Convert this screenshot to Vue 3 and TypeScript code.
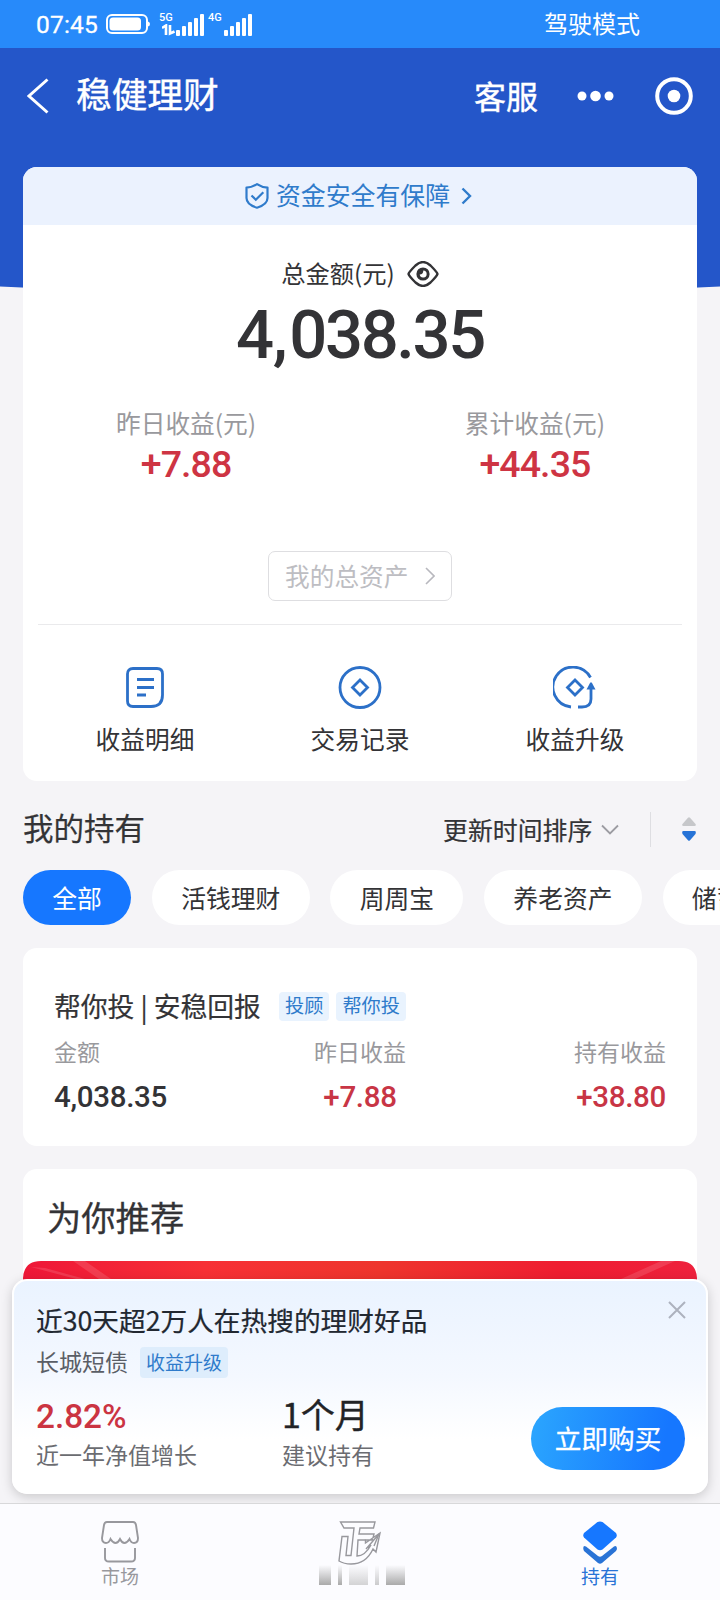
<script setup lang="ts">
import { ref } from 'vue'

interface Metric {
  label: string
  value: string
}

const summary: Metric[] = [
  { label: '昨日收益(元)', value: '+7.88' },
  { label: '累计收益(元)', value: '+44.35' },
]
const categories: string[] = ['全部', '活钱理财', '周周宝', '养老资产', '储蓄']
const activeCategory = ref<string>('全部')
const holding: Metric[] = [
  { label: '金额', value: '4,038.35' },
  { label: '昨日收益', value: '+7.88' },
  { label: '持有收益', value: '+38.80' },
]
const signalBars: number[] = [6, 10, 14, 18, 22]
</script>

<template>
  <div class="page">
    <div class="status">
      <span class="clock">07:45</span>
      <svg class="battery" width="44" height="20" viewBox="0 0 44 20">
        <rect x="1" y="1" width="40" height="18" rx="5" fill="none" stroke="#fff" stroke-width="2" />
        <rect x="3.5" y="3.5" width="31.500" height="13" rx="3.500" fill="#fff" />
        <path d="M42 7.500q2 .5 2 2.500t-2 2.500z" fill="#fff" />
      </svg>
      <div class="signal first">
        <div class="net">
          <span>5G</span>
          <svg width="13" height="12" viewBox="0 0 13 12" fill="none" stroke="#fff" stroke-width="2.600">
            <path d="M0 4 4 1.500V11M8 1v8.500l4.500-2" />
          </svg>
        </div>
        <div class="bars"><i v-for="h in signalBars" :key="h" :style="{ height: h + 'px' }"></i></div>
      </div>
      <div class="signal">
        <div class="net"><span>4G</span></div>
        <div class="bars"><i v-for="h in signalBars" :key="h" :style="{ height: h + 'px' }"></i></div>
      </div>
      <span class="mode">驾驶模式</span>
    </div>

    <header class="nav">
      <svg class="back" width="22" height="36" viewBox="0 0 22 36" fill="none" stroke="#fff" stroke-width="3">
        <path d="M20.500 1.500 2 18l18.500 16.500" />
      </svg>
      <h1>稳健理财</h1>
      <span class="service">客服</span>
      <svg class="dots" width="38" height="12" viewBox="0 0 38 12" fill="#fff">
        <circle cx="5" cy="6" r="4.500" /><circle cx="18.500" cy="6" r="5.300" /><circle cx="32" cy="6" r="4.500" />
      </svg>
      <svg class="target" width="38" height="38" viewBox="0 0 38 38">
        <circle cx="19" cy="19" r="16.800" fill="none" stroke="#fff" stroke-width="4" />
        <circle cx="19" cy="19" r="6.300" fill="#fff" />
      </svg>
    </header>

    <main>
      <section class="card overview">
        <div class="safety">
          <svg width="24" height="26" viewBox="0 0 24 26" fill="none" stroke="#2f7bcb" stroke-width="2.200">
            <path d="M12 1.200Q16.500 4.300 22.500 4.600V15Q22.500 21.500 12 24.700 1.500 21.500 1.500 15V4.600Q7.500 4.300 12 1.200Z" stroke-linejoin="round" />
            <path d="m6.500 12.500 4.300 4.200 7.500-7.500" />
          </svg>
          <span>资金安全有保障</span>
          <svg class="safe-arrow" width="11" height="18" viewBox="0 0 11 18" fill="none" stroke="#2f7bcb" stroke-width="2.400"><path d="m1.500 1.500 7.500 7.500-7.500 7.500" /></svg>
        </div>
        <div class="total-label">
          <span>总金额(元)</span>
          <svg width="32" height="26" viewBox="0 0 32 26" fill="none" stroke="#333336" stroke-width="2.400">
            <path d="M1.500 13Q2 11 8.500 4.500Q16-2.300 23.500 4.500Q30 11 30.500 13Q30 15 23.500 21.500Q16 28.300 8.500 21.500Q2 15 1.500 13Z" />
            <circle cx="16" cy="13" r="6.600" fill="#333336" stroke="none" />
            <path d="M16.300 9.500A3.500 3.500 0 1 1 12.700 13.500Q16.300 13.500 16.300 9.500Z" fill="#fff" stroke="none" />
          </svg>
        </div>
        <div class="total">4<span class="comma">,</span>038.35</div>
        <div class="summary">
          <div v-for="m in summary" :key="m.label" class="summary-item">
            <span class="muted">{{ m.label }}</span>
            <strong>{{ m.value }}</strong>
          </div>
        </div>
        <div class="assets">
          <span>我的总资产</span>
          <svg width="10" height="18" viewBox="0 0 10 18" fill="none" stroke="#b8b8be" stroke-width="1.600"><path d="m1 1 8 8-8 8" /></svg>
        </div>
        <div class="shortcuts">
          <div class="shortcut">
            <svg width="44" height="44" viewBox="0 0 44 44" fill="none" stroke="#2c70c8" stroke-width="2.800">
              <path d="M10 2.500H34Q39.500 2.500 39.500 8V29Q39.500 40.500 28 40.500H10Q4.500 40.500 4.500 35V8Q4.500 2.500 10 2.500Z" />
              <path d="M14 13.500H31M14 21.500H31M14 29H23" />
            </svg>
            <span>收益明细</span>
          </div>
          <div class="shortcut">
            <svg width="44" height="44" viewBox="0 0 44 44" fill="none" stroke="#2c70c8" stroke-width="2.800">
              <circle cx="22" cy="21.500" r="20" />
              <path d="m22 14 7.500 7.500-7.500 7.500-7.500-7.500z" />
            </svg>
            <span>交易记录</span>
          </div>
          <div class="shortcut">
            <svg width="44" height="44" viewBox="0 0 44 44" fill="none" stroke="#2c70c8" stroke-width="2.800">
              <path d="M37.500 11.500A20 20 0 1 0 18 41M25 41H29Q38 41 38 33V22" />
              <path d="M37 17Q38 15.500 39 17L42.500 23.500H33.500Z" fill="#2c70c8" stroke="none" />
              <path d="m22 14 7.500 7.500-7.500 7.500-7.500-7.500z" />
            </svg>
            <span>收益升级</span>
          </div>
        </div>
      </section>

      <div class="section-head">
        <h2>我的持有</h2>
        <span class="sort">更新时间排序</span>
        <svg class="down" width="18" height="11" viewBox="0 0 18 11" fill="none" stroke="#9c9ca2" stroke-width="1.800"><path d="m1 1.500 8 8 8-8" /></svg>
        <i class="divider"></i>
        <svg class="order" width="14" height="24" viewBox="0 0 14 24">
          <path d="M6 .8Q7-.2 8 .8L13.500 7Q14.500 9 12.500 9H1.500Q-.5 9 .5 7Z" fill="#c6c7ca" />
          <path d="M6 23.200Q7 24.200 8 23.200L13.500 17Q14.500 14 12.500 14H1.500Q-.5 14 .5 17Z" fill="#2673d7" />
        </svg>
      </div>

      <div class="chips">
        <button v-for="c in categories" :key="c" :class="{ active: c === activeCategory }" @click="activeCategory = c">{{ c }}</button>
      </div>

      <section class="card holding">
        <div class="holding-title"><h3>帮你投 | 安稳回报</h3><span class="tag">投顾</span><span class="tag">帮你投</span></div>
        <div class="holding-grid">
          <div v-for="m in holding" :key="m.label"><span class="muted">{{ m.label }}</span><b>{{ m.value }}</b></div>
        </div>
      </section>

      <section class="card recommend">
        <h2>为你推荐</h2>
        <svg class="banner" width="674" height="40" viewBox="0 0 674 40">
          <defs><linearGradient id="red"><stop offset="0" stop-color="#ee1738" /><stop offset=".27" stop-color="#f73035" /><stop offset=".53" stop-color="#ee352d" /><stop offset=".8" stop-color="#ef1d31" /><stop offset="1" stop-color="#ee213d" /></linearGradient></defs>
          <path d="M0 40V17Q1 0 18 0H656Q673 0 674 17V40Z" fill="url(#red)" />
          <path d="M8 6 53 18H62L22 7Z M50 0H62L88 18H76Z M652 0H638L598 18H612Z" fill="#fff" opacity=".13" />
        </svg>
      </section>
    </main>

    <aside class="promo">
      <svg class="close" width="18" height="18" viewBox="0 0 18 18" stroke="#adb2be" stroke-width="2"><path d="m1 1 16 16M17 1 1 17" /></svg>
      <h3>近30天超2万人在热搜的理财好品</h3>
      <div class="product"><span>长城短债</span><em>收益升级</em></div>
      <div class="offer">
        <div class="rate"><b>2.82%</b><span>近一年净值增长</span></div>
        <div class="term"><b>1个月</b><span>建议持有</span></div>
        <button>立即购买</button>
      </div>
    </aside>

    <nav class="tabs">
      <div class="tab">
        <svg width="38" height="42" viewBox="0 0 38 42" fill="none" stroke="#98989d" stroke-width="1.900">
          <path d="M6 1H32Q34.500 1 35 4L37 17Q37 22 33 22 30 22 28.500 18 26 22 23.500 22 21 22 19 18 17 22 14.500 22 12 22 9.500 18 8 22 5 22 1 22 1 17L3 4Q3.500 1 6 1Z" />
          <path d="M4 27V37Q4 40.500 8 40.500H30Q34 40.500 34 37V27" />
        </svg>
        <span>市场</span>
      </div>
      <div class="tab middle">
        <svg width="44" height="44" viewBox="0 0 44 44" fill="none" stroke="#98989d" stroke-width="1.400">
          <path d="M2.500 1H37L35.500 7H22L21 13H36L34.500 19H27.500V22L42 12 38 31 35 28Q28 43 13 43 6 43 1 40L4 15.500H10L8 34.500H13L16 7H6Z" />
          <path d="M27.500 19H20L19 35Q27 35 33 24L30 27M28 28 41 13 36 25" />
        </svg>
        <div class="smudge"><i></i><i></i><i></i><i></i><i></i></div>
      </div>
      <div class="tab current">
        <svg width="34" height="43" viewBox="0 0 34 43">
          <path d="M14.500 1Q17 0 19.500 1L33 12Q34.500 14.500 33 16.500L19.500 28.500Q17 30 14.500 28.500L1 16.500Q-.5 14.500 1 12Z" fill="#1677ff" />
          <path d="M1 25 3 25.500 15 35Q17 36.500 19 35L31 25.500Q34 24 34 28L33 30 19 42Q17 43.500 15 42L1 30Q-.5 27 1 25Z" fill="#2973d6" />
        </svg>
        <span>持有</span>
      </div>
    </nav>
  </div>
</template>

<style>
body { margin: 0; background: #f5f4f8; }
</style>

<style scoped>
* { box-sizing: border-box; }
h1, h2, h3 { margin: 0; font-weight: 400; }
svg { flex: none; display: block; }
.page { position: relative; width: 720px; height: 1600px; overflow: hidden; background: #f5f4f7; color: #333336; font-family: "Noto Sans CJK SC", sans-serif; white-space: nowrap; }
.status { display: flex; align-items: center; height: 48px; padding-left: 36px; background: #278afa; color: #fff; }
.clock { width: 62px; font: 400 24.500px/30px Roboto, sans-serif; letter-spacing: .2px; -webkit-text-stroke: .3px; padding-top: 1px; }
.battery { margin-left: 8px; }
.signal { display: flex; align-items: flex-end; height: 24px; }
.signal.first { margin-left: 10px; margin-right: 5px; }
.first .net { width: 16px; }
.net { width: 15px; height: 24px; font: 500 11px/11px Roboto, sans-serif; }
.net span { display: block; margin-left: -1px; }
.net svg { margin: 1px 0 0 2px; }
.bars { display: flex; align-items: flex-end; gap: 2px; }
.bars i { width: 4px; border-radius: 1px; background: #fff; }
.mode { margin: -2px 0 0 292px; font-size: 24px; line-height: 34px; }
.nav { display: flex; align-items: center; height: 96px; padding: 0 26px 0 27px; color: #fff; }
.nav h1 { width: 160px; margin-left: 27px; font-size: 35.700px; line-height: 50px; margin-top: -6px; -webkit-text-stroke: .4px; }
.service { margin-left: 238px; margin-top: -3px; width: 64px; font-size: 32px; line-height: 46px; -webkit-text-stroke: .4px; }
.dots { margin-left: 39px; }
.target { margin-left: 40px; }
.page::before { content: ""; position: absolute; top: 48px; left: -190px; width: 1100px; height: 247px; background: #2456c9; border-radius: 0 0 50% 50% / 0 0 35px 35px; }
.nav, main { position: relative; }
main { padding: 23px 23px 0; }
.card { background: #fff; border-radius: 14px; }
.overview { height: 614px; overflow: hidden; }
.safety { display: flex; justify-content: center; align-items: center; height: 58px; background: #ebf2fe; color: #2f7bcb; font-size: 24.900px; }
.safety span { margin: -4px 0 0 7px; }
.safe-arrow { margin: -1px 3px 0 11px; }
.total-label { display: flex; align-items: center; justify-content: center; gap: 12px; height: 36px; margin-top: 31px; font-size: 24.300px; }
.total-label span { margin-top: -4px; }
.total { height: 72px; margin-top: 7px; font: 500 67px/72px Roboto, sans-serif; text-align: center; letter-spacing: -2.400px; }
.comma { margin: 0 4px 0 1px; }
.summary { display: flex; justify-content: space-between; padding: 0 92px 0 93px; margin-top: 33px; }
.summary-item { display: flex; flex-direction: column; align-items: center; }
.muted { color: #99999d; }
.summary .muted { font-size: 24.700px; line-height: 36px; }
.summary strong { margin-top: 3px; color: #ce3443; font: 500 37.500px/42px Roboto, sans-serif; letter-spacing: -.9px; }
.assets { display: flex; align-items: center; justify-content: space-between; width: 184px; height: 50px; margin: 66px auto 0; padding: 0 16px; border: 1px solid #dedee1; border-radius: 7px; color: #bdbdc2; font-size: 24.700px; }
.assets span { margin-top: -2px; }
.shortcuts { display: flex; justify-content: space-between; margin: 23px 15px 0; border-top: 1px solid #eaeaec; padding: 41px 57px 0; }
.shortcut { display: flex; flex-direction: column; align-items: center; width: 100px; font-size: 24.700px; line-height: 36px; }
.shortcut span { margin-top: 10px; }
.section-head { display: flex; align-items: center; height: 50px; margin-top: 23px; }
.section-head h2 { width: 124px; margin-top: -5px; font-size: 30.500px; -webkit-text-stroke: .2px; }
.sort { margin-left: 296px; margin-top: -1px; width: 150px; font-size: 24.900px; -webkit-text-stroke: .2px; }
.down { margin-left: 8px; }
.divider { width: 1px; height: 35px; margin-left: 31px; background: #dedee2; }
.order { margin-left: 31px; }
.chips { display: flex; gap: 20.700px; margin-top: 16px; margin-right: -23px; overflow: hidden; }
.chips button { flex: none; height: 55px; padding: 0 29.300px; border: 0; border-radius: 28px; background: #fff; color: #333336; font: 24.800px/50px "Noto Sans CJK SC", sans-serif; padding-bottom: 2px; }
.chips .active { background: #1677ff; color: #fff; }
.holding { height: 198px; margin-top: 23px; padding: 38px 31px 0; }
.holding-title { display: flex; align-items: center; height: 38px; }
.holding h3 { width: 209px; margin-right: 16px; font-size: 26.800px; -webkit-text-stroke: .2px; }
.tag { height: 29px; padding: 0 6px; margin: 2px 7px 0 0; border-radius: 4px; background: #e9f3fe; color: #2f7bcb; font-size: 19.200px; line-height: 27px; }
.holding-grid { display: grid; grid-template-columns: 1fr 1fr 1fr; margin-top: 9px; }
.holding-grid div { display: flex; flex-direction: column; }
.holding-grid div:nth-child(2) { align-items: center; }
.holding-grid div:last-child { align-items: flex-end; }
.holding-grid .muted { font-size: 23px; line-height: 36px; }
.holding-grid b { margin-top: 9px; font: 500 29.500px/38px Roboto, sans-serif; letter-spacing: -.3px; }
.holding-grid div:not(:first-child) b { color: #c83545; }
.recommend { height: 260px; margin-top: 23px; }
.recommend h2 { height: 92px; padding: 22px 24px 0; font-size: 34.300px; line-height: 50px; -webkit-text-stroke: .3px; }
.promo { position: absolute; left: 12px; top: 1279px; width: 696px; height: 215px; border: 2px solid #fff; border-radius: 15px; padding: 20px 21px 0 22px; background: linear-gradient(180deg, #eaf3ff, #f4f8ff 45%, #fff 75%); box-shadow: 0 3px 12px rgba(0, 0, 0, .18); }
.promo .close { position: absolute; right: 20px; top: 20px; }
.promo h3 { color: #222831; font-size: 26.700px; line-height: 38px; -webkit-text-stroke: .2px; }
.product { display: flex; align-items: center; height: 32px; margin-top: 7px; color: #5a5e66; font-size: 23px; }
.product span { margin-top: -2px; }
.product em { height: 31px; margin-left: 12px; padding: 0 6px; border-radius: 4px; background: #deedfc; color: #2f7bcb; font-size: 19px; font-style: normal; line-height: 29px; }
.offer { display: flex; margin-top: 16px; }
.offer > div { display: flex; flex-direction: column; }
.rate { width: 246px; }
.offer b { height: 42px; font-weight: 500; line-height: 42px; }
.rate b { color: #cb3442; font: 500 33.300px/46px Roboto, sans-serif; }
.term b { color: #222326; font-size: 34px; font-weight: 400; line-height: 40px; -webkit-text-stroke: .4px; }
.offer span { color: #6b6c71; font-size: 23px; line-height: 36px; }
.offer button { width: 154px; height: 63px; margin-left: auto; margin-top: 13px; padding: 0 0 1px; border: 0; border-radius: 32px; background: linear-gradient(100deg, #2ba6fe, #1677ff 85%); color: #fff; font: 26.700px/60px "Noto Sans CJK SC", sans-serif; -webkit-text-stroke: .3px; }
.tabs { position: absolute; left: 0; right: 0; bottom: 0; height: 97px; display: flex; border-top: 1px solid #d8d8da; background: #fcfcff; }
.tab { width: 240px; display: flex; flex-direction: column; align-items: center; padding-top: 17px; color: #98989d; font-size: 19px; line-height: 26px; }
.tab span { margin-top: 0; height: 26px; }
.current span { margin-top: -1px; }
.current { color: #2973d6; }
.smudge { display: flex; gap: 7px; width: 94px; height: 20px; margin-top: 0; overflow: hidden; }
.smudge i { width: 12px; background: linear-gradient(#fcfcff, #aaa); }
.smudge i:nth-child(2), .smudge i:nth-child(4) { width: 4px; }
.smudge i:nth-child(3) { width: 19px; opacity: .5; }
.smudge i:nth-child(4) { opacity: .6; }
.smudge i:last-child { width: 19px; }
.smudge i:first-child { margin-left: 6px; }
</style>
